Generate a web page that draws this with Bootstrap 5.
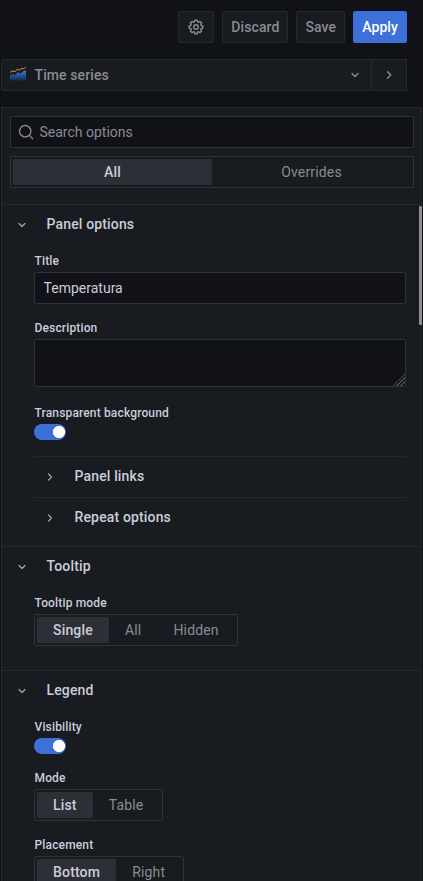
<!DOCTYPE html>
<html lang="en">
<head>
<meta charset="utf-8">
<meta name="viewport" content="width=device-width, initial-scale=1">
<title>Edit panel</title>
<link href="https://cdn.jsdelivr.net/npm/bootstrap@5.3.0/dist/css/bootstrap.min.css" rel="stylesheet">
<style>
:root{--canvas:#111217;--pane:#181b1f;--weak:#25282d;--medium:#303238;--txt:#ccccdc;--dim:#8a8a95}
body{background:var(--canvas);color:var(--txt);font:400 14px/22px Roboto,sans-serif;letter-spacing:.15px;height:881px;overflow:hidden}
svg{display:block;flex:none}
.bar{padding-top:11px}
.tool{height:32px;border:1px solid var(--weak);border-radius:2px;background:var(--pane);color:var(--dim);font-size:14px;font-weight:500;line-height:22px;padding:0 8px;letter-spacing:.1px}
.tool.gear{width:36px}
.tool.apply{background:#3d71d9;border-color:#3d71d9;color:#fff;padding:0 8px}
.picker{height:32px;margin:16px 16px 16px 1px}
.picker .viz{border:1px solid var(--weak);background:var(--pane);color:var(--dim);font-weight:500;padding:0 11px 0 8px;border-radius:2px 0 0 2px}
.picker .go{width:35px;border:1px solid var(--weak);border-left:0;background:var(--pane);color:var(--dim)}
.viz-name{margin-left:8.5px;letter-spacing:.1px}
.pane{margin:0 1px;border:1px solid var(--weak);border-bottom:0;background:var(--pane);height:774px;overflow:hidden}
.field{background:var(--canvas)!important;border:1px solid var(--medium);border-radius:2px;color:var(--txt)!important;font-size:14px;line-height:22px;padding:0 8.6px;height:32px;letter-spacing:0;box-shadow:none!important}
.search{color:var(--dim)!important;padding:0 7px;margin:8px 7px 8px 8px}
.hint{margin-left:5.5px}
.radios{border:1px solid var(--medium);border-radius:2px;height:32px;padding:2px;color:var(--dim)}
.radios span{padding:0 16.07px;line-height:26px;height:26px;text-align:center;border-radius:2px}
.radios .on{background:#2d2f36;color:var(--txt);font-weight:500}
.scope{margin:0 7px 16px 8px}
.sect{border-top:1px solid var(--weak)}
.head{height:40px;font-weight:500;padding:0 0 2px 12px}
.head svg{margin:2px 16.5px 0 0;color:#a5a5b2}
.inner{padding:8px 15px 24px 32px}
.lab{display:block;font-size:12px;font-weight:500;line-height:16px;height:16px;margin-bottom:3px;padding-left:.5px}
.grp{margin-bottom:16px}
.desc{margin-bottom:18px}
textarea.field{height:48px;min-height:48px;display:block}
textarea.field::-webkit-resizer{background:linear-gradient(135deg,transparent 58%,#4b4d54 58% 63%,transparent 63% 70%,#4b4d54 70% 75%,transparent 75% 82%,#4b4d54 82% 87%,transparent 87%)}
.form-check-input.tog{width:32px;height:16px;margin:0;float:none;display:block;border:0;background:radial-gradient(circle at 25px 8px,#fff 5.7px,#3d71d9 6.4px)!important;box-shadow:none}
.sub{border-top:1px solid var(--weak)}
.sub .head{padding-left:8px}
.thumb{position:absolute;left:419px;top:206px;width:3px;height:119px;background:#8e8e95;border-radius:1px}
</style>
</head>
<body>
<header class="bar d-flex justify-content-end gap-2 pe-3">
<button class="btn tool gear d-flex align-items-center justify-content-center" aria-label="Settings"><svg width="18" height="18" viewBox="0 0 24 24" fill="currentColor"><path d="M21.32 9.55l-1.89-.63.89-1.78A1 1 0 0 0 20.13 6L18 3.87a1 1 0 0 0-1.15-.19l-1.78.89-.63-1.89A1 1 0 0 0 13.5 2h-3a1 1 0 0 0-.95.68l-.63 1.89-1.78-.89A1 1 0 0 0 6 3.87L3.87 6a1 1 0 0 0-.19 1.15l.89 1.78-1.89.63A1 1 0 0 0 2 10.5v3a1 1 0 0 0 .68.95l1.89.63-.89 1.78A1 1 0 0 0 3.87 18L6 20.13a1 1 0 0 0 1.15.19l1.78-.89.63 1.89a1 1 0 0 0 .95.68h3a1 1 0 0 0 .95-.68l.63-1.89 1.78.89a1 1 0 0 0 1.13-.19L20.13 18a1 1 0 0 0 .19-1.15l-.89-1.78 1.89-.63A1 1 0 0 0 22 13.5v-3a1 1 0 0 0-.68-.95zM20 12.78l-1.2.4a2 2 0 0 0-1.16 2.81l.57 1.14-1.1 1.1-1.12-.59a2 2 0 0 0-2.81 1.16l-.4 1.2h-1.56l-.4-1.2a2 2 0 0 0-2.81-1.16l-1.14.57-1.1-1.1.57-1.12a2 2 0 0 0-1.14-2.81l-1.2-.4v-1.56l1.2-.4a2 2 0 0 0 1.16-2.81l-.57-1.1 1.1-1.1 1.12.57a2 2 0 0 0 2.81-1.16l.4-1.2h1.56l.4 1.2a2 2 0 0 0 2.81 1.16l1.14-.57 1.1 1.1-.59 1.1a2 2 0 0 0 1.16 2.81l1.2.4zM12 8a4 4 0 1 0 0 8 4 4 0 0 0 0-8zm0 6a2 2 0 1 1 0-4 2 2 0 0 1 0 4z"/></svg></button>
<button class="btn tool">Discard</button>
<button class="btn tool">Save</button>
<button class="btn tool apply">Apply</button>
</header>
<div class="picker d-flex">
<div class="viz d-flex align-items-center flex-grow-1">
<svg width="16" height="16" viewBox="0 0 16 16"><defs><linearGradient id="area" x1="0" y1="0" x2="0" y2="1"><stop offset="0" stop-color="#3f7fc4"/><stop offset=".5" stop-color="#25579a"/><stop offset="1" stop-color="#182c4a"/></linearGradient><linearGradient id="line" x1="0" y1="0" x2="1" y2="0"><stop offset="0" stop-color="#e0b54a"/><stop offset="1" stop-color="#d08a35"/></linearGradient></defs><path d="M0 8.5 2.5 7 5 8 8 5.2 10.5 6.2 13 4.5 16 3V13.5H0z" fill="url(#area)"/><path d="M.3 5.4 2.5 3.8 5 4.7 7.5 2.1 9.5 3.1 12 1.2 13.3 1.8 15.7 .3" fill="none" stroke="url(#line)" stroke-width="1"/></svg>
<span class="flex-grow-1 viz-name">Time series</span>
<svg width="10" height="10" viewBox="0 0 10 10" fill="none" stroke="currentColor" stroke-width="1.4" stroke-linecap="round" stroke-linejoin="round"><path d="m2 3.5 3 3 3-3"/></svg>
</div>
<div class="go d-flex align-items-center justify-content-center"><svg width="10" height="10" viewBox="0 0 10 10" fill="none" stroke="currentColor" stroke-width="1.4" stroke-linecap="round" stroke-linejoin="round"><path d="m3.5 1.7 3.3 3.3-3.3 3.3"/></svg></div>
</div>
<main class="pane">
<div class="field search d-flex align-items-center"><svg width="16" height="16" viewBox="0 0 16 16" fill="none" stroke="currentColor" stroke-width="1.3" stroke-linecap="round"><circle cx="7.2" cy="7.2" r="5.7"/><path d="m11.4 11.4 3.3 3.3"/></svg><span class="hint">Search options</span></div>
<div class="radios scope d-flex"><span class="on w-50">All</span><span class="w-50">Overrides</span></div>

<section class="sect">
<div class="head d-flex align-items-center"><svg width="16" height="16" viewBox="0 0 16 16" fill="none" stroke="currentColor" stroke-width="1.2" stroke-linecap="round" stroke-linejoin="round"><path d="m5 6.5 3 3 3-3"/></svg>Panel options</div>
<div class="inner pb-2">
<div class="grp"><label class="lab" for="title">Title</label><input id="title" class="form-control field" value="Temperatura"></div>
<div class="desc"><label class="lab" for="desc">Description</label><textarea id="desc" class="form-control field"></textarea></div>
<div class="grp form-switch p-0"><label class="lab" for="bg">Transparent background</label><input id="bg" class="form-check-input tog" type="checkbox" role="switch" checked></div>
<div class="sub"><div class="head d-flex align-items-center"><svg width="16" height="16" viewBox="0 0 16 16" fill="none" stroke="currentColor" stroke-width="1.2" stroke-linecap="round" stroke-linejoin="round"><path d="m6.5 5 3 3-3 3"/></svg>Panel links</div></div>
<div class="sub"><div class="head d-flex align-items-center"><svg width="16" height="16" viewBox="0 0 16 16" fill="none" stroke="currentColor" stroke-width="1.2" stroke-linecap="round" stroke-linejoin="round"><path d="m6.5 5 3 3-3 3"/></svg>Repeat options</div></div>
</div>
</section>

<section class="sect">
<div class="head d-flex align-items-center"><svg width="16" height="16" viewBox="0 0 16 16" fill="none" stroke="currentColor" stroke-width="1.2" stroke-linecap="round" stroke-linejoin="round"><path d="m5 6.5 3 3 3-3"/></svg>Tooltip</div>
<div class="inner"><span class="lab">Tooltip mode</span><div class="radios d-inline-flex align-top"><span class="on">Single</span><span>All</span><span>Hidden</span></div></div>
</section>

<section class="sect">
<div class="head d-flex align-items-center"><svg width="16" height="16" viewBox="0 0 16 16" fill="none" stroke="currentColor" stroke-width="1.2" stroke-linecap="round" stroke-linejoin="round"><path d="m5 6.5 3 3 3-3"/></svg>Legend</div>
<div class="inner">
<div class="grp form-switch p-0"><label class="lab" for="vis">Visibility</label><input id="vis" class="form-check-input tog" type="checkbox" role="switch" checked></div>
<div class="grp"><span class="lab">Mode</span><div class="radios d-inline-flex align-top"><span class="on">List</span><span>Table</span></div></div>
<div><span class="lab">Placement</span><div class="radios d-inline-flex align-top"><span class="on">Bottom</span><span>Right</span></div></div>
</div>
</section>
</main>
<div class="thumb"></div>
<script src="https://cdn.jsdelivr.net/npm/bootstrap@5.3.0/dist/js/bootstrap.bundle.min.js"></script>
</body>
</html>
